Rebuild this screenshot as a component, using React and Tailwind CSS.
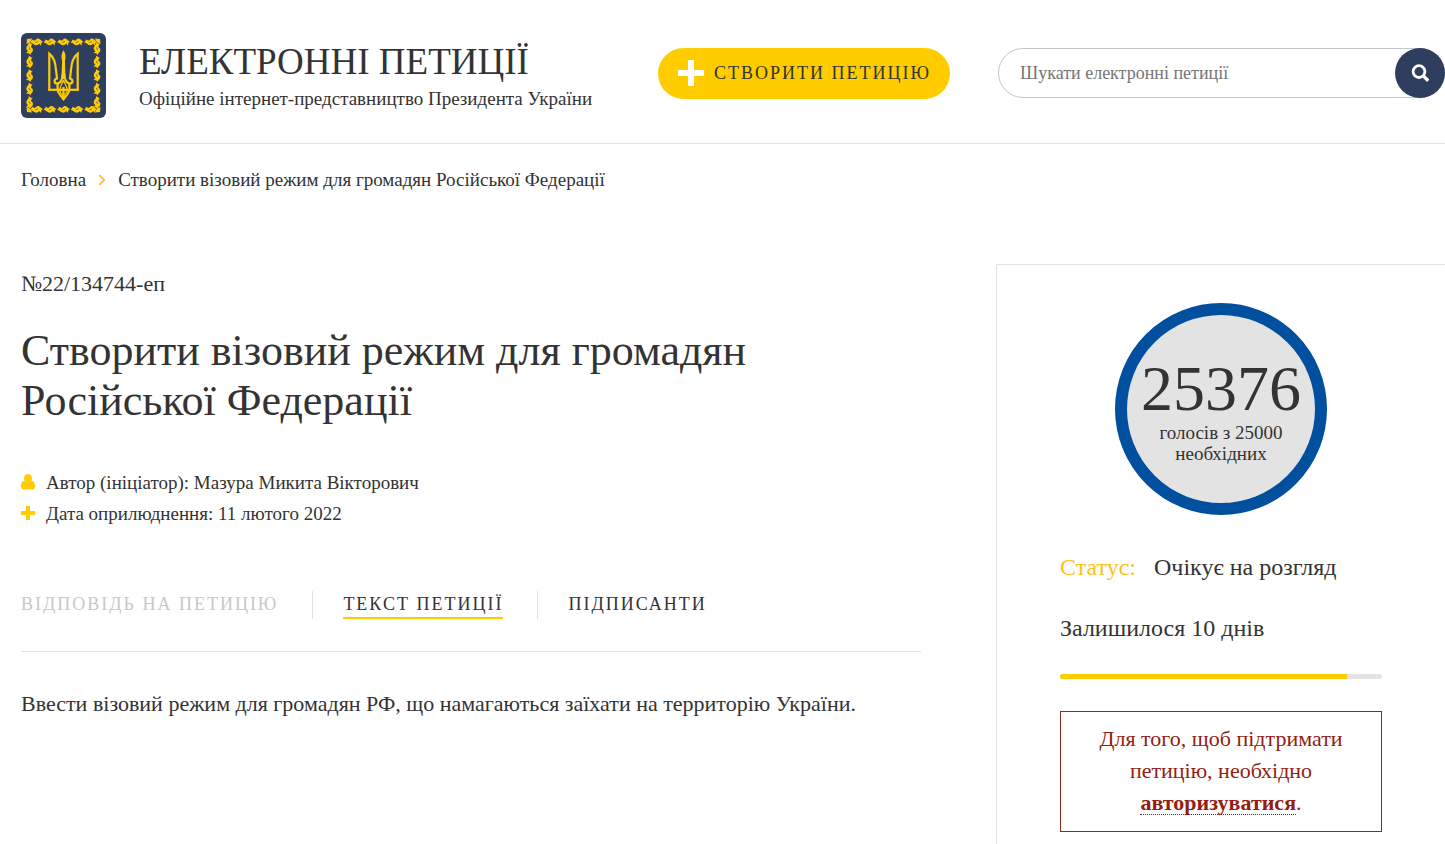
import { useState } from 'react'

const TABS = [
  { id: 'answer', label: 'Відповідь на петицію', disabled: true },
  { id: 'text', label: 'Текст петиції' },
  { id: 'signers', label: 'Підписанти' },
]

// One leaf of the gold braid that runs round the emblem
function Leaf({ x, y, angle }) {
  return (
    <g transform={`translate(${x} ${y}) rotate(${angle})`}>
      <path d="M-6.6 -3 L-4.6 -1.6 L-6.2 2.2 C-4.4 1 -3.4 2.4 -1.8 3.2 C0.6 4 2 3 3 1.4 L5 3.2 L5 0.6 L6.4 -1.6 C5 -1.2 4.4 -2 3 -3 C1 -4 -0.4 -3.2 -1.4 -1.2 C-3.2 -0.4 -4.6 -2 -6.6 -3 Z" />
      <path d="M-1 1 L1.4 -0.6" stroke="#2e3e5e" strokeWidth="0.6" />
    </g>
  )
}

function Emblem() {
  const steps = [15.5, 29, 42.5, 56, 69.5]
  return (
    <svg viewBox="0 0 85 85" className="h-[85px] w-[85px] shrink-0" aria-hidden="true">
      <rect width="85" height="85" rx="6" fill="#2e3e5e" />
      <g fill="#fccb0a">
        {steps.map((p) => (
          <g key={p}>
            <Leaf x={p} y={8.8} angle={8} />
            <Leaf x={p} y={76.2} angle={8} />
            <Leaf x={8.8} y={p} angle={98} />
            <Leaf x={76.2} y={p} angle={98} />
          </g>
        ))}
        <path d="M5.5 11 L6 6 L11 5.5 L10 8 L8 10 Z M74 5.5 L79 6 L79.5 11 L77 10 L75 8 Z M79.5 74 L79 79 L74 79.5 L75 77 L77 75 Z M11 79.5 L6 79 L5.5 74 L8 75 L10 77 Z" />
      </g>
      <g fill="none" stroke="#fccb0a" strokeWidth="2.2" strokeLinejoin="miter">
        <path d="M28.3 57.3 V20.6 C32.6 24 34.6 30 35 37 L36 45.5 C32.6 46.4 32.8 50.6 36.2 50.6 C39.6 50.2 41.4 47 41.8 41" />
        <path d="M56.7 57.3 V20.6 C52.4 24 50.4 30 50 37 L49 45.5 C52.4 46.4 52.2 50.6 48.8 50.6 C45.4 50.2 43.6 47 43.2 41" />
        <path d="M27.2 56.8 H57.8" />
        <path d="M36.6 50.6 V57 C37 61 40 62.4 42.5 66 C45 62.4 48 61 48.4 57 V50.6" />
        <path d="M42.5 47 C41.5 51 38.8 53 38.8 57 C38.8 60 41 61 42.5 63 C44 61 46.2 60 46.2 57 C46.2 53 43.5 51 42.5 47 Z" strokeWidth="1.2" />
        <path d="M42.5 54 V67" />
      </g>
      <path d="M42.5 17.3 C40.2 20.5 40 24 41.1 28 L40.4 46 H44.6 L43.9 28 C45 24 44.8 20.5 42.5 17.3 Z" fill="#fccb0a" />
    </svg>
  )
}

function Plus({ className }) {
  return (
    <svg viewBox="0 0 26 26" className={className} fill="currentColor" aria-hidden="true">
      <path d="M10 0h6v10h10v6H16v10h-6V16H0v-6h10z" />
    </svg>
  )
}

function Header() {
  const [query, setQuery] = useState('')
  return (
    <header className="flex items-start border-b border-[#e3e3e3] pt-[33px] pb-[25px] pl-[21px]">
      <Emblem />
      <div className="mt-[6px] ml-[33px] whitespace-nowrap">
        <p className="text-[37px] leading-[46px]">ЕЛЕКТРОННІ ПЕТИЦІЇ</p>
        <p className="text-[19px] leading-[28px]">Офіційне інтернет-представництво Президента України</p>
      </div>
      <button
        type="button"
        className="mt-[15px] mr-12 ml-auto flex h-[51px] w-[292px] shrink-0 items-center gap-[10px] rounded-full bg-[#ffcc00] pb-px pl-[20px] text-[18px] tracking-[2px] whitespace-nowrap uppercase"
      >
        <Plus className="h-[26px] w-[26px] text-white" />
        Створити петицію
      </button>
      <form
        className="mt-[15px] flex h-[50px] w-[447px] shrink-0 rounded-full border border-[#c5c5cd]"
        onSubmit={(e) => e.preventDefault()}
      >
        <input
          type="text"
          aria-label="Шукати електронні петиції"
          placeholder="Шукати електронні петиції"
          value={query}
          onChange={(e) => setQuery(e.target.value)}
          className="min-w-0 flex-1 bg-transparent pl-[21px] text-[18px] outline-none placeholder:text-[#757575]"
        />
        <button
          type="submit"
          aria-label="Шукати"
          className="-m-px flex h-[50px] w-[50px] items-center justify-center rounded-full bg-[#2e3e5e] text-white"
        >
          <svg viewBox="0 0 18 18" className="h-[18px] w-[18px]" fill="none" stroke="currentColor" strokeWidth="2.8" aria-hidden="true">
            <circle cx="8" cy="7.6" r="5.9" />
            <path d="M12.2 11.8l5 5" strokeWidth="3.4" />
          </svg>
        </button>
      </form>
    </header>
  )
}

function Petition() {
  const [tab, setTab] = useState('text')
  return (
    <main className="min-w-0 flex-1">
      <p className="pt-[6px] text-[22px] leading-[28px]">№22/134744-еп</p>
      <h1 className="mt-[28px] max-w-[800px] text-[44px] leading-[50px]">
        Створити візовий режим для громадян Російської Федерації
      </h1>
      <ul className="mt-[41px] text-[19px] leading-[31px]">
        <li className="flex items-center gap-[11px]">
          <svg viewBox="0 0 14 16" className="mb-[2px] h-4 w-[14px] text-[#ffcc00]" fill="currentColor" aria-hidden="true">
            <ellipse cx="7" cy="4.4" rx="4" ry="4.4" />
            <path d="M3.2 6.8C1 7 0 9.4 0 12.4C0 14.4 1 15.6 2.8 15.6H11.2C13 15.6 14 14.4 14 12.4C14 9.4 13 7 10.8 6.8C8.6 9 5.4 9 3.2 6.8Z" />
          </svg>
          Автор (ініціатор): Мазура Микита Вікторович
        </li>
        <li className="flex items-center gap-[11px]">
          <svg viewBox="0 0 14 14" className="mb-[2px] h-[14px] w-[14px] text-[#ffcc00]" fill="currentColor" aria-hidden="true">
            <path d="M5 0h4v5h5v4H9v5H5V9H0V5h5z" />
          </svg>
          Дата оприлюднення: 11 лютого 2022
        </li>
      </ul>
      <nav className="mt-[62px] flex items-center border-b border-[#e3e3e3] pb-8">
        {TABS.map((t, i) => (
          <div
            key={t.id}
            className={i ? 'ml-[34px] flex h-7 items-center border-l border-[#e3e3e3] pl-[30px]' : 'flex h-7 items-center'}
          >
            <button
              type="button"
              disabled={t.disabled}
              onClick={() => setTab(t.id)}
              className={
                'h-7 border-b-2 text-[18px] leading-[26px] tracking-[2px] whitespace-nowrap uppercase disabled:text-[#c8c8c8] ' +
                (tab === t.id ? 'border-[#ffcc00]' : 'border-transparent')
              }
            >
              {t.label}
            </button>
          </div>
        ))}
      </nav>
      <p className="mt-[36px] text-[22px] leading-[32px]">
        Ввести візовий режим для громадян РФ, що намагаються заїхати на территорію України.
      </p>
    </main>
  )
}

function VotePanel({ votes, needed, daysLeft, progress }) {
  return (
    <aside className="w-[449px] shrink-0 border-t border-l border-[#e3e3e3] px-[63px] pt-[38px] pb-10">
      <div className="mx-auto flex h-[212px] w-[212px] flex-col items-center rounded-full border-[12px] border-[#00509f] bg-[#e3e3e3] pt-[42px] text-center">
        <span className="text-[64px] leading-[64px]">{votes}</span>
        <span className="mt-px text-[19px] leading-[21px]">
          голосів з {needed}
          <br />
          необхідних
        </span>
      </div>
      <p className="mt-[37px] text-[24px] leading-[30px]">
        <span className="mr-[18px] text-[#fcc21c]">Статус:</span>
        Очікує на розгляд
      </p>
      <p className="mt-[31px] text-[24px] leading-[30px]">Залишилося {daysLeft} днів</p>
      <div className="mt-[31px] h-[5px] overflow-hidden rounded-full bg-[#e3e3e3]">
        <div className="h-full bg-[#ffcc00]" style={{ width: `${progress}%` }} />
      </div>
      <p className="mt-8 border border-[#8b2a20] px-5 pt-[11px] pb-[12px] text-center text-[22px] leading-[32px] text-[#931d12]">
        Для того, щоб підтримати петицію, необхідно{' '}
        <a href="#login" className="inline-block border-b border-dotted border-[#931d12] leading-[22px] font-bold">
          авторизуватися
        </a>
        .
      </p>
    </aside>
  )
}

export default function App() {
  return (
    <div className="min-h-screen bg-white font-['Liberation_Serif',Georgia,serif] text-[#333333]">
      <Header />
      <nav aria-label="Навігація" className="flex items-center pt-[22px] pl-[21px] text-[19px] leading-[28px]">
        <a href="#home">Головна</a>
        <svg viewBox="0 0 8 12" className="mx-3 h-3 w-2" fill="none" stroke="#ffc233" strokeWidth="1.8" aria-hidden="true">
          <path d="M1.2 1.2L6.2 6L1.2 10.8" />
        </svg>
        <span>Створити візовий режим для громадян Російської Федерації</span>
      </nav>
      <div className="mt-[70px] flex items-stretch gap-[75px] pl-[21px]">
        <Petition />
        <VotePanel votes={25376} needed={25000} daysLeft={10} progress={89} />
      </div>
    </div>
  )
}
